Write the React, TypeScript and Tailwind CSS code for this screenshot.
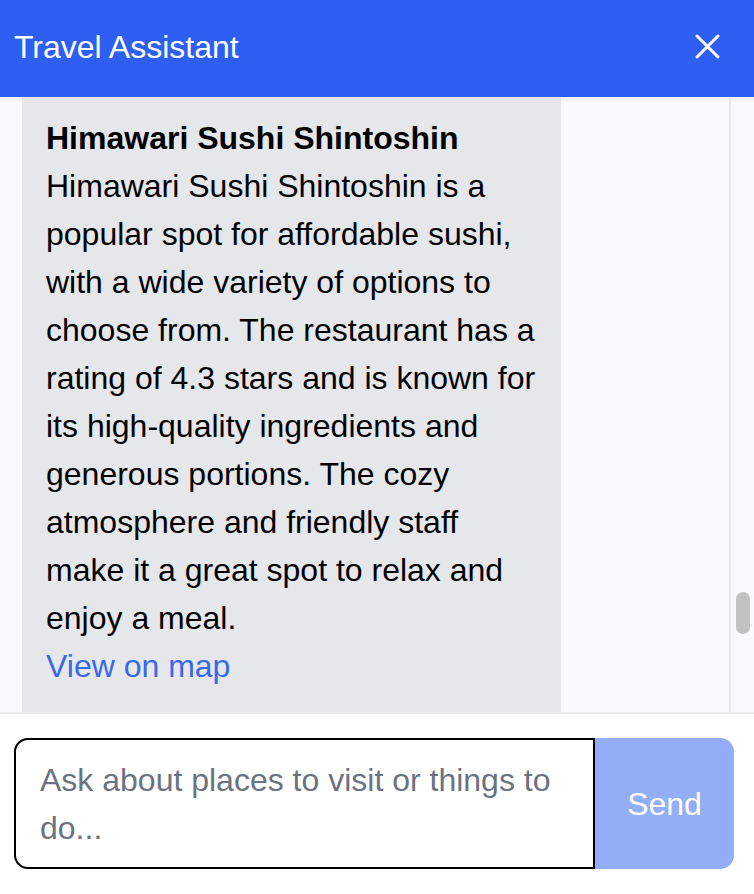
export default function App() {
  const font = { fontFamily: '"Liberation Sans", Arial, sans-serif' };
  return (
    <div className="flex h-[894px] w-[754px] flex-col bg-white" style={font}>
      <header className="flex h-[97px] shrink-0 items-center justify-between bg-[#2e5ef2] pb-[4px] pl-[14px] pr-[34px] text-white">
        <h1 className="text-[32px] leading-none">Travel Assistant</h1>
        <button aria-label="Close" className="flex h-[26px] w-[26px] items-center justify-center">
          <svg width="25" height="25" viewBox="0 0 25 25" fill="none" stroke="white" strokeWidth="3" strokeLinecap="round">
            <path d="M2 2 L23 23 M23 2 L2 23" />
          </svg>
        </button>
      </header>

      <div className="flex h-[615px] shrink-0 bg-[#f9fafb]">
        <div className="flex-1 overflow-hidden pl-[22px]">
          <div className="w-[539px] bg-[#e5e7eb] px-[24px] pt-[17px] pb-[22px] text-[32px] leading-[48px] text-black">
            <div className="font-bold">Himawari Sushi Shintoshin</div>
            <p>
              Himawari Sushi Shintoshin is a popular spot for affordable sushi, with a wide variety of options to
              choose from. The restaurant has a rating of 4.3 stars and is known for its high-quality ingredients and
              generous portions. The cozy atmosphere and friendly staff make it a great spot to relax and enjoy a
              meal.
            </p>
            <a className="text-[#3a69e8]" href="#">
              View on map
            </a>
          </div>
        </div>
        <div className="w-[25px] shrink-0 border-l-2 border-[#e8e8e8] pl-[5px] pt-[495px]">
          <div className="h-[42px] w-[14px] rounded-full bg-[#c1c1c1]" />
        </div>
      </div>

      <div className="flex flex-1 border-t-2 border-[#ececec] pt-[24px] pb-[25px] pl-[14px] pr-[20px]">
        <div className="flex-1 rounded-l-[14px] border-2 border-black px-[24px] pt-[16px] text-[32px] leading-[48px] text-[#6b7280]">
          Ask about places to visit or things to do...
        </div>
        <button className="w-[139px] rounded-r-[14px] bg-[#94adf7] text-[32px] text-white">Send</button>
      </div>
    </div>
  );
}
